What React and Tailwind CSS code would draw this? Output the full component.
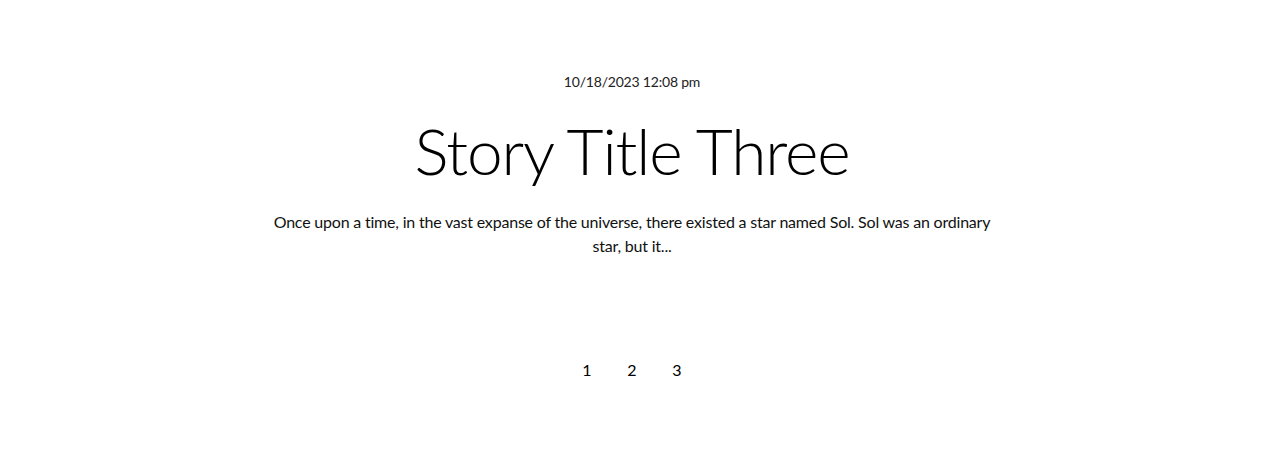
export default function App() {
  return (
    <div className="min-h-[462px] bg-white flex flex-col items-center text-black">
      <div className="mt-[73px] text-[14px] leading-[18px] tracking-[-0.2px] font-['Lato',sans-serif] text-[#222]">10/18/2023 12:08 pm</div>
      <h1 className="mt-[22px] text-[64px] leading-[76px] font-light font-['Lato',sans-serif] tracking-[-1.15px]">Story Title Three</h1>
      <p className="mt-[21px] w-[725px] text-center text-[16px] leading-[24px] tracking-[-0.2px] font-['Lato',sans-serif] text-[#111]">
        Once upon a time, in the vast expanse of the universe, there existed a star named Sol. Sol was an ordinary star, but it...
      </p>
      <div className="mt-[100px] flex gap-[29px] text-[16px] leading-[24px] font-['Lato',sans-serif]">
        <span className="w-[16px] text-center">1</span>
        <span className="w-[16px] text-center">2</span>
        <span className="w-[16px] text-center">3</span>
      </div>
    </div>
  );
}
